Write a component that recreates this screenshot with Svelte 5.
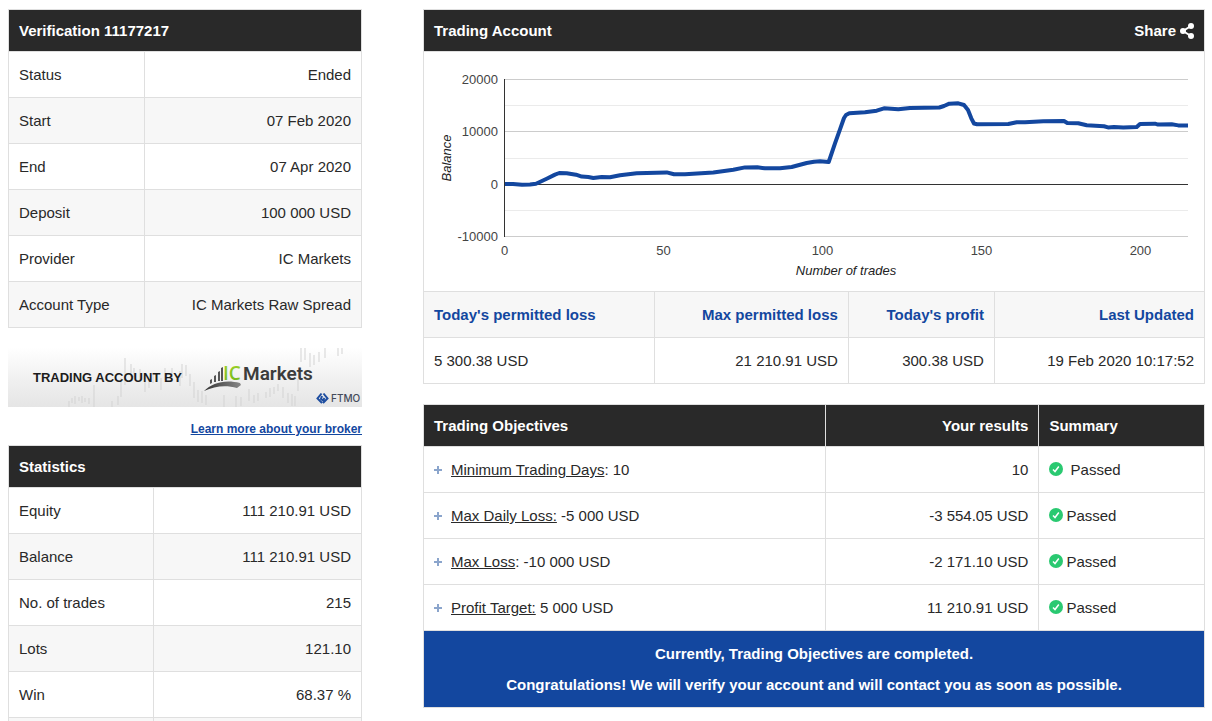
<script>
const account = [
	{ label: 'Status', value: 'Ended' },
	{ label: 'Start', value: '07 Feb 2020' },
	{ label: 'End', value: '07 Apr 2020' },
	{ label: 'Deposit', value: '100 000 USD' },
	{ label: 'Provider', value: 'IC Markets' },
	{ label: 'Account Type', value: 'IC Markets Raw Spread' },
];

const statistics = [
	{ label: 'Equity', value: '111 210.91 USD' },
	{ label: 'Balance', value: '111 210.91 USD' },
	{ label: 'No. of trades', value: '215' },
	{ label: 'Lots', value: '121.10' },
	{ label: 'Win', value: '68.37 %' },
	{ label: '', value: '' },
];

const objectives = [
	{ name: 'Minimum Trading Days', after: ': 10', result: '10', summary: '\u00a0Passed' },
	{ name: 'Max Daily Loss:', after: ' -5 000 USD', result: '-3 554.05 USD', summary: 'Passed' },
	{ name: 'Max Loss', after: ': -10 000 USD', result: '-2 171.10 USD', summary: 'Passed' },
	{ name: 'Profit Target:', after: ' 5 000 USD', result: '11 210.91 USD', summary: 'Passed' },
];

// horizontal lines of the chart, labelled ones are the major steps
const gridLines = [
	{ y: 27, label: '20000' },
	{ y: 53 },
	{ y: 79, label: '10000' },
	{ y: 106 },
	{ y: 158 },
	{ y: 184, label: '-10000' },
	{ y: 132, label: '0', axis: true },
];

const ticks = [0, 50, 100, 150, 200];
const tickX = (trade) => 80.5 + trade * 3.18;

const balance = [
	[81, 132], [89, 132], [98, 132.7], [106, 132.4], [112, 131.7], [122.7, 126.7],
	[131, 122.6], [135.3, 121], [142.7, 121.3], [152, 122.7], [157.7, 124.6], [164.3, 125],
	[169.3, 126], [177.7, 125], [186, 125.3], [196, 123.3], [212.7, 121.3],
	[242.7, 120.4], [250, 122.3], [261, 122.3], [289.3, 120.4], [309.3, 117.7],
	[321, 115.4], [333.3, 115.3], [341, 116.3], [356, 116.2], [367.7, 115],
	[382.7, 111], [390, 109.7], [396, 109.3], [404.7, 110], [411, 91.3], [416, 77.3],
	[420, 66], [422, 63], [425.3, 61.3], [441, 60.3], [452.7, 58.7], [460, 56.3],
	[474.3, 57.3], [486, 55.9], [515.3, 55.5], [520, 54], [525.3, 51.7], [534.3, 51.3],
	[540, 53], [544, 58], [547.3, 66.3], [550, 71.5], [553, 72.3], [584.3, 72],
	[592.7, 70.3], [601, 70.3], [619.3, 69.3], [640, 69], [643.3, 71], [654.3, 71.3],
	[662.7, 73.3], [680, 74.3], [684, 75.4], [690, 75], [699.3, 75.5], [712.7, 75],
	[716, 72], [731, 71.7], [734, 72.6], [747.7, 72.3], [754.3, 73.4], [764, 73.4],
];
</script>

<main>

<aside>
	<table class="facts">
		<colgroup><col style="width: 38.5%" /><col /></colgroup>
		<thead>
			<tr><th colspan="2">Verification 11177217</th></tr>
		</thead>
		<tbody>
			{#each account as row}
				<tr><td>{ row.label }</td><td>{ row.value }</td></tr>
			{/each}
		</tbody>
	</table>

	<div class="broker">
		<svg viewBox="0 0 354 59" role="img" aria-label="Trading account by IC Markets">
			<defs>
				<linearGradient id="haze" x2="0" y2="1">
					<stop offset="0" stop-color="#fff" />
					<stop offset="0.5" stop-color="#f1f1f1" />
					<stop offset="1" stop-color="#e5e5e5" />
				</linearGradient>
				<linearGradient id="lime" x2="0" y2="1">
					<stop offset="0" stop-color="#a5d62a" />
					<stop offset="1" stop-color="#69b21b" />
				</linearGradient>
				<linearGradient id="steel" x2="1">
					<stop offset="0" stop-color="#333" />
					<stop offset="1" stop-color="#888" />
				</linearGradient>
			</defs>
			<rect width="354" height="59" fill="url(#haze)" />
			<path
				d="M61 59v-6M64 55v-5M67 56v-8M71 53v-4M74 55v-7M77 54v-4M81 56v-6M86 59V37M104 59v-6M110 57v-9M113 49V30M117 37V10M123 29V16M126 29v-9M132 32V21M137 44V27M141 40v-9M145 35v-10M149 34v-9M153 42v-12M157 32V20M164 34V20M172 38V23M174 30V16M178 28V17M182 38V26M186 50V34M190 54V42M194 55V43M198 57V47M216 59V47M228 59V48M233 58v-9M241 53V41M246 55V47M250 53v-8M258 50v-6M262 49v-9M266 46v-7M270 43v-7M275 50V39M280 55V45M284 58V46M287 58V48M290 43V31M293 14V0M297 12V0M302 19V5M306 17V7M311 14V4M317 10V0M330 8V0M334 6V0"
				stroke="#d3d3d3" fill="none"
			/>
			<text x="25" y="34" class="by">TRADING ACCOUNT BY</text>
			<path d="M202 36v-4l2-1v4zM206 34v-6l2-1v7zM210 33v-9l2-1v10zM213 33V20l2-1v14z" fill="#555" />
			<path d="M196 43c8-8 21-12 36-8l1 2-4 3c-11-3-22-2-33 3z" fill="url(#steel)" />
			<text x="215" y="32" class="ic" fill="url(#lime)">IC</text>
			<text x="235" y="32" class="markets">Markets</text>
			<path d="M313.500 45.500L309.500 50.500l4.500 4.500M315.500 45.500l4 5-4.500 4.500M314 48l-1 3 2 1.500 1.500-2.500" stroke="#1e4ea0" stroke-width="2" fill="none" />
			<text x="323" y="54" class="ftmo">FTMO</text>
		</svg>
		<a href="#broker">Learn more about your broker</a>
	</div>

	<table class="facts">
		<colgroup><col style="width: 41%" /><col /></colgroup>
		<thead>
			<tr><th colspan="2">Statistics</th></tr>
		</thead>
		<tbody>
			{#each statistics as row}
				<tr><td>{ row.label }</td><td>{ row.value }</td></tr>
			{/each}
		</tbody>
	</table>
</aside>

<div class="content">
	<section>
		<header>
			<h2>Trading Account</h2>
			<button class="share">
				Share
				<svg width="14" height="16" viewBox="0 0 14 16" aria-hidden="true">
					<path d="M11 3L3 8l8 5" stroke="#fff" stroke-width="2" fill="none" />
					<circle cx="11" cy="3" r="3" fill="#fff" />
					<circle cx="3" cy="8" r="3" fill="#fff" />
					<circle cx="11" cy="13" r="3" fill="#fff" />
				</svg>
			</button>
		</header>

		<svg class="chart" viewBox="0 0 780 239" role="img" aria-label="Balance by number of trades">
			{#each gridLines as line}
				<rect x="80" y={ line.y } width="684" height="1" fill={ line.axis ? '#333' : line.label ? '#ccc' : '#ebebeb' } />
				{#if line.label}
					<text x="74" y={ line.y + 5 } text-anchor="end">{ line.label }</text>
				{/if}
			{/each}
			<rect x="80" y="27" width="1" height="158" fill="#333" />
			<polyline points={ balance.join(' ') } />
			{#each ticks as tick}
				<text x={ tickX(tick) } y="203" text-anchor="middle">{ tick }</text>
			{/each}
			<text class="title" x="422" y="223" text-anchor="middle">Number of trades</text>
			<text class="title" transform="translate(27 106) rotate(-90)" text-anchor="middle">Balance</text>
		</svg>

		<table class="limits">
			<colgroup>
				<col style="width: 29.6%" />
				<col style="width: 24.8%" />
				<col style="width: 18.7%" />
				<col />
			</colgroup>
			<thead>
				<tr>
					<th>Today's permitted loss</th>
					<th>Max permitted loss</th>
					<th>Today's profit</th>
					<th>Last Updated</th>
				</tr>
			</thead>
			<tbody>
				<tr>
					<td>5 300.38 USD</td>
					<td>21 210.91 USD</td>
					<td>300.38 USD</td>
					<td>19 Feb 2020 10:17:52</td>
				</tr>
			</tbody>
		</table>
	</section>

	<table class="objectives">
		<colgroup>
			<col style="width: 51.5%" />
			<col style="width: 27.3%" />
			<col />
		</colgroup>
		<thead>
			<tr><th>Trading Objectives</th><th>Your results</th><th>Summary</th></tr>
		</thead>
		<tbody>
			{#each objectives as item}
				<tr>
					<td>
						<button class="expand" aria-label="Show details">
							<svg width="8" height="8" viewBox="0 0 8 8"><path d="M4 0v8M0 4h8" stroke="#8ba5cc" stroke-width="2" /></svg>
						</button><a href="#objective">{ item.name }</a>{ item.after }
					</td>
					<td>{ item.result }</td>
					<td>
						<svg class="check" width="14" height="14" viewBox="0 0 14 14" aria-hidden="true">
							<circle cx="7" cy="7" r="7" fill="#2ac971" />
							<path d="M4 7.500l2 2L9.800 4.500" stroke="#fff" stroke-width="1.500" fill="none" />
						</svg>{ item.summary }
					</td>
				</tr>
			{/each}
		</tbody>
		<tfoot>
			<tr>
				<td colspan="3">
					<p>Currently, Trading Objectives are completed.</p>
					<p>Congratulations! We will verify your account and will contact you as soon as possible.</p>
				</td>
			</tr>
		</tfoot>
	</table>
</div>

</main>

<style>
:global(body) {
	margin: 0;
	background: #fff;
}

main {
	--line: 1px solid #dfdfdf;
	--dark: #292929;
	--blue: #13479f;

	box-sizing: border-box;
	height: 100vh;
	overflow: hidden;
	padding: 9px 7px 0 8px;

	display: grid;
	grid-template-columns: minmax(0, 354fr) minmax(0, 782fr);
	align-items: start;
	column-gap: 61px;

	font: 15px/25px "Liberation Sans", Arial, sans-serif;
	color: #292929;
}

table {
	width: 100%;
	table-layout: fixed;
	border-collapse: collapse;
}

th, td {
	padding: 10px;
	border: var(--line);
	text-align: right;
}

th:first-child, td:first-child {
	text-align: left;
}

.facts, .objectives {
	th {
		background: var(--dark);
		color: #fff;
		line-height: 21px;
	}
}

.facts td {
	height: 25px;
}

.facts tbody tr:nth-child(even) {
	background: #f7f7f7;
}

.broker {
	padding: 20px 0 3px;
	display: flex;
	flex-direction: column;

	svg {
		display: block;
		width: 100%;
	}

	a {
		align-self: flex-end;
		margin-top: 10px;
		color: var(--blue);
		font-size: 12px;
		font-weight: bold;
	}
}

.by {
	font: bold 13px "Liberation Sans", sans-serif;
	fill: #1c1c1c;
}

.ic {
	font: 600 19px "Open Sans", sans-serif;
}

.markets {
	font: 600 19px Roboto, sans-serif;
	fill: #3c3c3c;
}

.ftmo {
	font: 500 10px Inter, sans-serif;
	fill: #444b5a;
}

.content {
	display: flex;
	flex-direction: column;
	gap: 20px;
}

header {
	display: flex;
	justify-content: space-between;
	align-items: center;

	padding: 10px;
	border: var(--line);
	background: var(--dark);
	color: #fff;
	line-height: 21px;

	h2 {
		margin: 0;
		font-size: 15px;
	}
}

button {
	padding: 0;
	border: 0;
	background: none;
	color: inherit;
	font: inherit;
	cursor: pointer;
}

.share {
	display: flex;
	align-items: center;
	gap: 4px;
	font-weight: bold;
}

.chart {
	display: block;
	box-sizing: border-box;
	width: 100%;
	border: var(--line);
	border-width: 0 1px;

	text {
		font-size: 13px;
		fill: #444;
	}

	.title {
		font-style: italic;
		fill: #222;
	}

	polyline {
		fill: none;
		stroke: var(--blue);
		stroke-width: 4;
		stroke-linejoin: round;
	}
}

.limits th {
	background: #f7f7f7;
	color: var(--blue);
}

.objectives {
	th:last-child, td:last-child {
		text-align: left;
	}

	a {
		color: inherit;
	}

	tfoot td {
		padding: 7px 10px;
		background: var(--blue);
		color: #fff;
		font-weight: bold;
		text-align: center !important;
	}

	p {
		margin: 0;
		line-height: 31px;
	}
}

.expand {
	margin-right: 9px;

	svg {
		display: inline-block;
		vertical-align: 1px;
	}
}

.check {
	margin-right: 3px;
	vertical-align: -1px;
}
</style>
